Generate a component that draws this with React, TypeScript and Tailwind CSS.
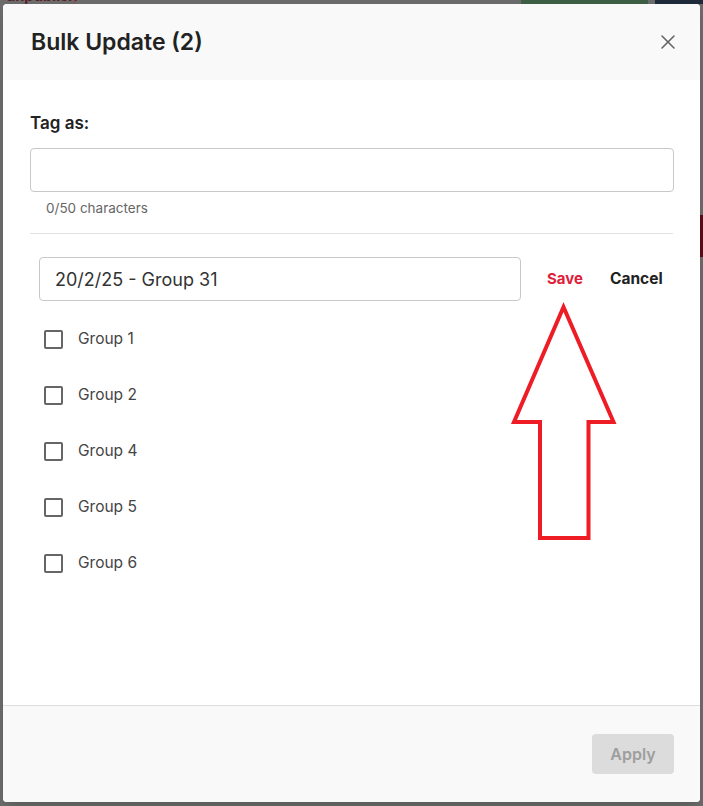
import { X } from "lucide-react";

const groups = ["Group 1", "Group 2", "Group 4", "Group 5", "Group 6"];

const font = { fontFamily: "Inter, 'Noto Sans', sans-serif" };

const Arrow = () => (
  <svg
    className="absolute left-[500px] top-[290px] pointer-events-none"
    width="130"
    height="260"
    viewBox="500 290 130 260"
  >
    <polygon
      points="563.5,307 514,422 540,422 540,538 588.5,538 588.5,422 613.5,422"
      fill="none"
      stroke="#ee1c25"
      strokeWidth="4"
      strokeLinejoin="miter"
    />
  </svg>
);

const App = () => {
  return (
    <div
      className="relative w-[703px] h-[806px] overflow-hidden bg-[#6b6b6b] pt-[4px] pl-[3px]"
      style={font}
    >
      {/* page peeking under the overlay */}
      <div className="absolute left-[6px] top-[-12px] text-[15px] leading-[16px] font-semibold text-[#5a1a22]">
        unpublish
      </div>
      <div className="absolute left-[74px] top-0 w-px h-[4px] bg-[#8a4a50]" />
      <div className="absolute left-[521px] top-0 w-[127px] h-[4px] bg-[#3b5e45]" />
      <div className="absolute left-[655px] top-0 w-[48px] h-[4px] bg-[#1e2a3a]" />
      <div className="absolute right-0 top-[215px] w-[3px] h-[42px] bg-[#5a0d18]" />

      <div className="relative flex flex-col w-[697px] h-[798px] bg-white rounded-[4px] overflow-hidden shadow-lg">
        <div className="flex items-center justify-between h-[76px] bg-[#f9f9f9] pl-[28px] pr-[20px]">
          <h2 className="text-[23px] font-semibold text-[#222]">
            Bulk Update (2)
          </h2>
          <X className="w-[24px] h-[24px] text-[#666]" strokeWidth={1.6} />
        </div>

        <div className="flex-1 flex flex-col px-[27px] pt-[31px]">
          <label className="text-[17px] leading-[24px] font-semibold text-[#222]">
            Tag as:
          </label>
          <div className="mt-[13px] mr-[-1px] h-[44px] rounded-[4px] border border-[#c8c8c8]" />
          <div className="mt-[8px] pl-[16px] text-[13.5px] leading-[16px] text-[#666]">
            0/50 characters
          </div>
          <div className="mt-[17px] h-px bg-[#e2e2e2]" />

          <div className="mt-[23px] flex items-center pl-[9px] pr-[10px]">
            <div className="flex items-center w-[482px] h-[44px] rounded-[4px] border border-[#c8c8c8] px-[15px] text-[18px] text-[#333]">
              20/2/25 - Group 31
            </div>
            <button className="ml-[26px] text-[15px] font-bold text-[#e0203a]">
              Save
            </button>
            <button className="ml-[27px] text-[15.5px] font-bold text-[#222]">
              Cancel
            </button>
          </div>

          <div className="mt-[10px] flex flex-col">
            {groups.map((g) => (
              <div key={g} className="flex items-center h-[56px] pl-[14px]">
                <span className="w-[19px] h-[19px] rounded-[2px] border-2 border-[#666]" />
                <span className="ml-[15px] text-[15.5px] text-[#444]">{g}</span>
              </div>
            ))}
          </div>
        </div>

        <div className="flex items-center justify-end h-[97px] border-t border-[#dedede] bg-[#f9f9f9] pr-[26px]">
          <button className="w-[82px] h-[40px] rounded-[4px] bg-[#dcdcdc] text-[16px] font-semibold text-[#9e9e9e]">
            Apply
          </button>
        </div>
      </div>

      <Arrow />
    </div>
  );
};

export default App;
